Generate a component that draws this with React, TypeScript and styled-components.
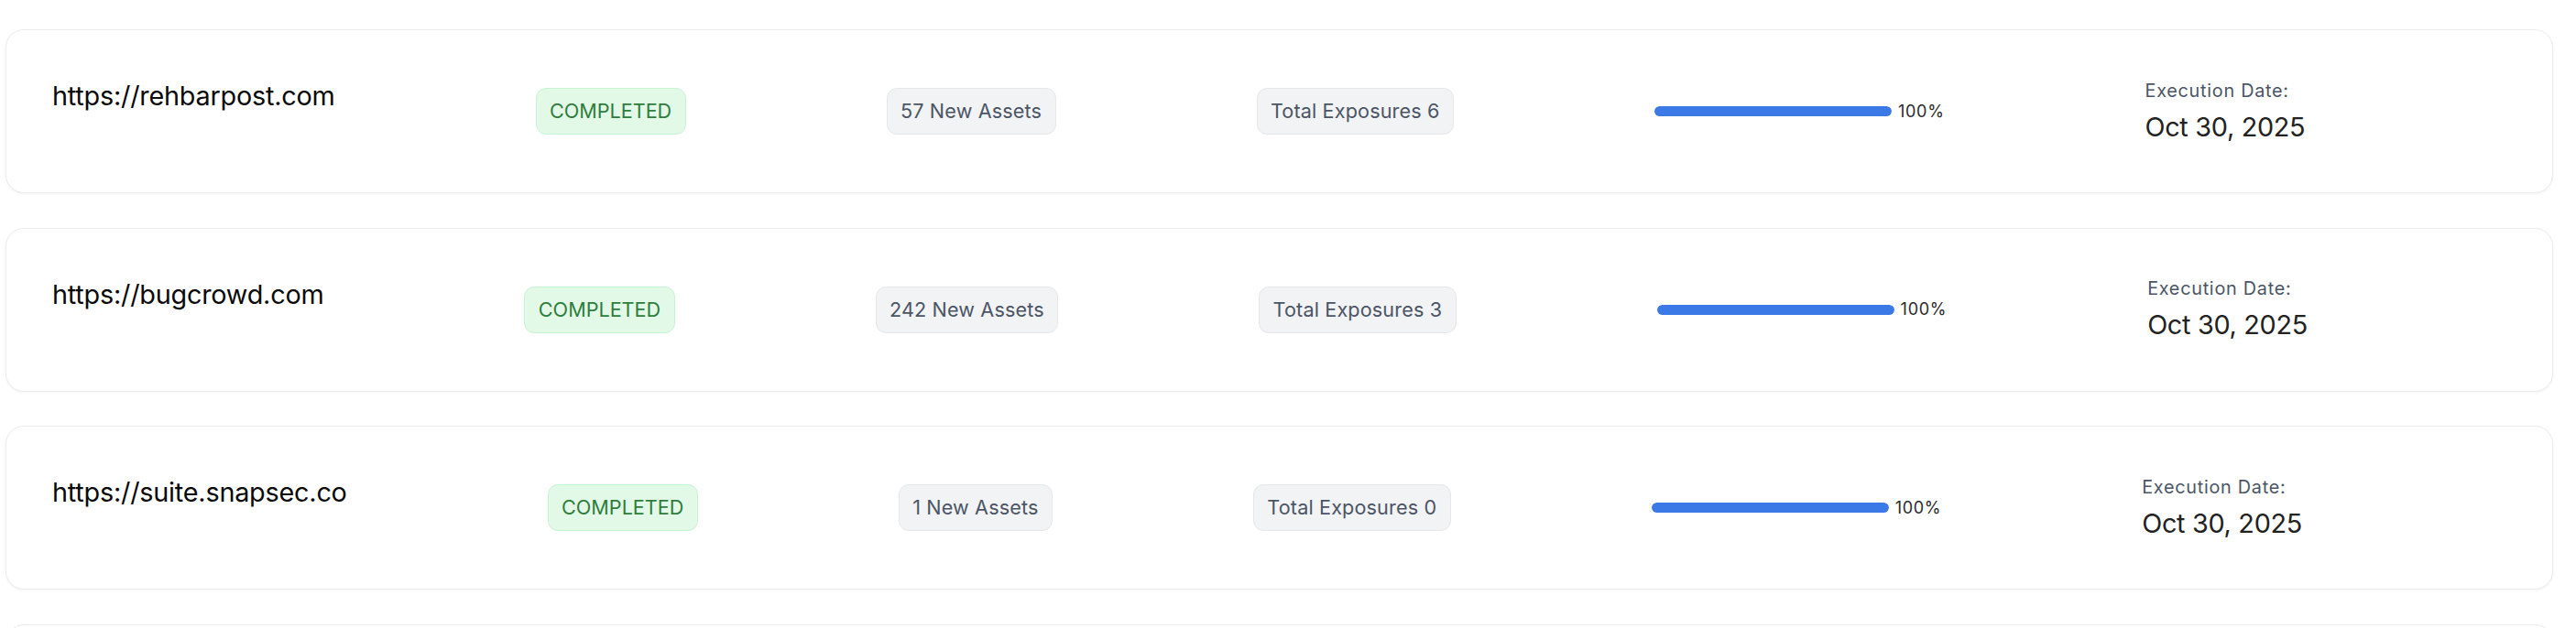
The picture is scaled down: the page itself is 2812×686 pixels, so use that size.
import React from "react";
import styled, { createGlobalStyle } from "styled-components";

const GlobalStyle = createGlobalStyle`
  html, body {
    margin: 0;
    padding: 0;
    background: #ffffff;
    font-family: Inter, "Noto Sans", "Liberation Sans", sans-serif;
    -webkit-font-smoothing: antialiased;
  }
  * { box-sizing: border-box; }
`;

const List = styled.div`
  display: flex;
  flex-direction: column;
  gap: 37.5px;
  padding: 32px 25px 0 6px;
  height: 686px;
  overflow: hidden;
`;

const Card = styled.div`
  flex: none;
  height: 179px;
  background: #ffffff;
  border: 1.5px solid #ececee;
  border-radius: 20px;
  box-shadow: 0 1px 3px rgba(0, 0, 0, 0.05);
  display: flex;
  align-items: center;
  gap: 219px;
  padding: 0 50px;
`;

const Url = styled.div`
  align-self: flex-start;
  margin-top: 50px;
  font-size: 28.8px;
  line-height: 43px;
  letter-spacing: -0.22px;
  color: #0a0a0a;
  white-space: nowrap;
`;

const Pill = styled.span<{ $tone: "green" | "gray" }>`
  display: inline-flex;
  align-items: center;
  height: 51px;
  padding: 0 14.4px;
  border-radius: 11px;
  font-size: 21.6px;
  line-height: 33px;
  white-space: nowrap;
  letter-spacing: ${(p) => (p.$tone === "green" ? "0" : "0.15px")};
  border: 1.5px solid ${(p) => (p.$tone === "green" ? "#c8f3d3" : "#e6e7ea")};
  background: ${(p) => (p.$tone === "green" ? "#e2f9e8" : "#f2f3f5")};
  color: ${(p) => (p.$tone === "green" ? "#2e7d3b" : "#4b5565")};
`;

const Progress = styled.div`
  display: flex;
  align-items: center;
  gap: 7px;
`;

const Track = styled.div`
  width: 259px;
  height: 11px;
  border-radius: 6px;
  background: #e5e7eb;
  overflow: hidden;
`;

const Fill = styled.div`
  height: 100%;
  border-radius: 6px;
  background: #3a79e6;
`;

const Percent = styled.span`
  font-size: 18px;
  line-height: 24px;
  letter-spacing: 0.7px;
  color: #2a2a2a;
`;

const DateBlock = styled.div`
  display: flex;
  flex-direction: column;
`;

const DateLabel = styled.span`
  font-size: 19.8px;
  line-height: 28px;
  letter-spacing: 0.75px;
  margin-bottom: 6px;
  color: #4b5565;
`;

const DateValue = styled.span`
  font-size: 28.8px;
  line-height: 40px;
  letter-spacing: -0.3px;
  color: #222222;
`;

type Scan = {
  url: string;
  assets: number;
  exposures: number;
  progress: number;
  date: string;
};

const scans: Scan[] = [
  { url: "https://rehbarpost.com", assets: 57, exposures: 6, progress: 100, date: "Oct 30, 2025" },
  { url: "https://bugcrowd.com", assets: 242, exposures: 3, progress: 100, date: "Oct 30, 2025" },
  { url: "https://suite.snapsec.co", assets: 1, exposures: 0, progress: 100, date: "Oct 30, 2025" },
];

export default function App() {
  return (
    <>
      <GlobalStyle />
      <List>
        {scans.map((s) => (
          <Card key={s.url}>
            <Url>{s.url}</Url>
            <Pill $tone="green">COMPLETED</Pill>
            <Pill $tone="gray">{s.assets} New Assets</Pill>
            <Pill $tone="gray">Total Exposures {s.exposures}</Pill>
            <Progress>
              <Track>
                <Fill style={{ width: `${s.progress}%` }} />
              </Track>
              <Percent>{s.progress}%</Percent>
            </Progress>
            <DateBlock>
              <DateLabel>Execution Date:</DateLabel>
              <DateValue>{s.date}</DateValue>
            </DateBlock>
          </Card>
        ))}
        {/* next card in the list, scrolled below the fold */}
        <Card />
      </List>
    </>
  );
}
